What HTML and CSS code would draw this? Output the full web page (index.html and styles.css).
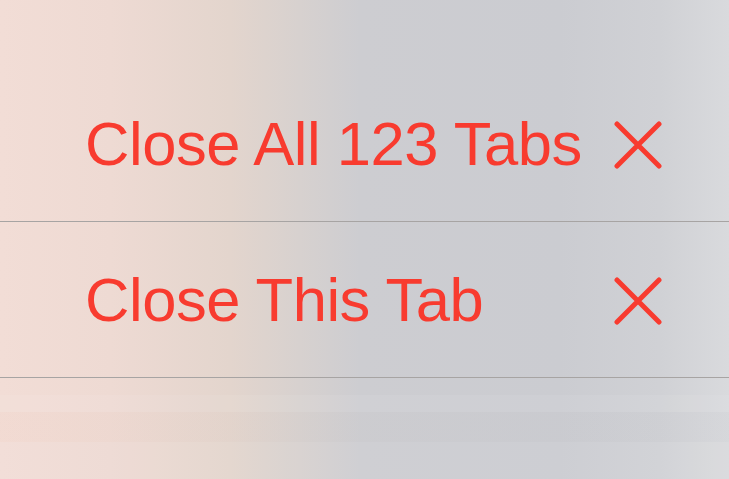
FILE: index.html
```html
<!DOCTYPE html>
<html lang="en">

<head>
    <meta charset="UTF-8">
    <meta name="viewport" content="width=device-width, initial-scale=1.0">
    <title>Tab Menu</title>
    <link rel="stylesheet" href="styles.css">
</head>

<body>

    <div id="menu_container">
        <div class="menu_item">
            <span class="menu_label">Close All 123 Tabs</span>
            <svg class="close_icon" viewBox="0 0 48 48" width="48" height="48">
                <path d="M3 3 L45 45 M45 3 L3 45" />
            </svg>
        </div>
        <div class="menu_item">
            <span class="menu_label">Close This Tab</span>
            <svg class="close_icon" viewBox="0 0 48 48" width="48" height="48">
                <path d="M3 3 L45 45 M45 3 L3 45" />
            </svg>
        </div>
        <!-- blurred rows peeking out under the menu -->
        <div id="menu_below">
            <div class="band band_light"></div>
            <div class="band band_dark"></div>
            <div class="band band_soft"></div>
        </div>
    </div>

</body>

</html>
```

FILE: styles.css
```css
*{
    box-sizing: border-box;
}

body{
    margin: 0;
    font-family: "Liberation Sans", Arial, sans-serif;
}

#menu_container{
    width: 729px;
    height: 479px;
    padding-top: 66px;
    overflow: hidden;
    background: linear-gradient(to right,
        #f2ddd6 0px,
        #eedad3 110px,
        #e3d5cd 230px,
        #d7d1cf 300px,
        #cdcdd1 360px,
        #cbccd1 560px,
        #d0d1d5 660px,
        #d9dadd 729px);
}

.menu_item{
    display: flex;
    align-items: center;
    justify-content: space-between;
    height: 156px;
    padding-left: 85px;
    padding-right: 67px;
    border-bottom: 1px solid #a7a4a3;
}

.menu_label{
    font-size: 61.5px;
    line-height: 1;
    letter-spacing: -0.45px;
    color: #f83b2f;
}

.close_icon{
    flex-shrink: 0;
    margin-top: 2px;
}

.close_icon path{
    stroke: #f83b2f;
    stroke-width: 5;
    stroke-linecap: round;
    fill: none;
}

#menu_below{
    display: flex;
    flex-direction: column;
}

.band{
    width: 100%;
}

.band_light{
    height: 17px;
    margin-top: 17px;
    background-color: rgba(255, 255, 255, 0.07);
}

.band_dark{
    height: 30px;
    background: linear-gradient(to right,
        rgba(240, 200, 185, 0.12) 0px,
        rgba(200, 190, 185, 0.05) 300px,
        rgba(180, 182, 190, 0.07) 729px);
}

.band_soft{
    height: 40px;
    background-color: rgba(255, 255, 255, 0.05);
}
```
